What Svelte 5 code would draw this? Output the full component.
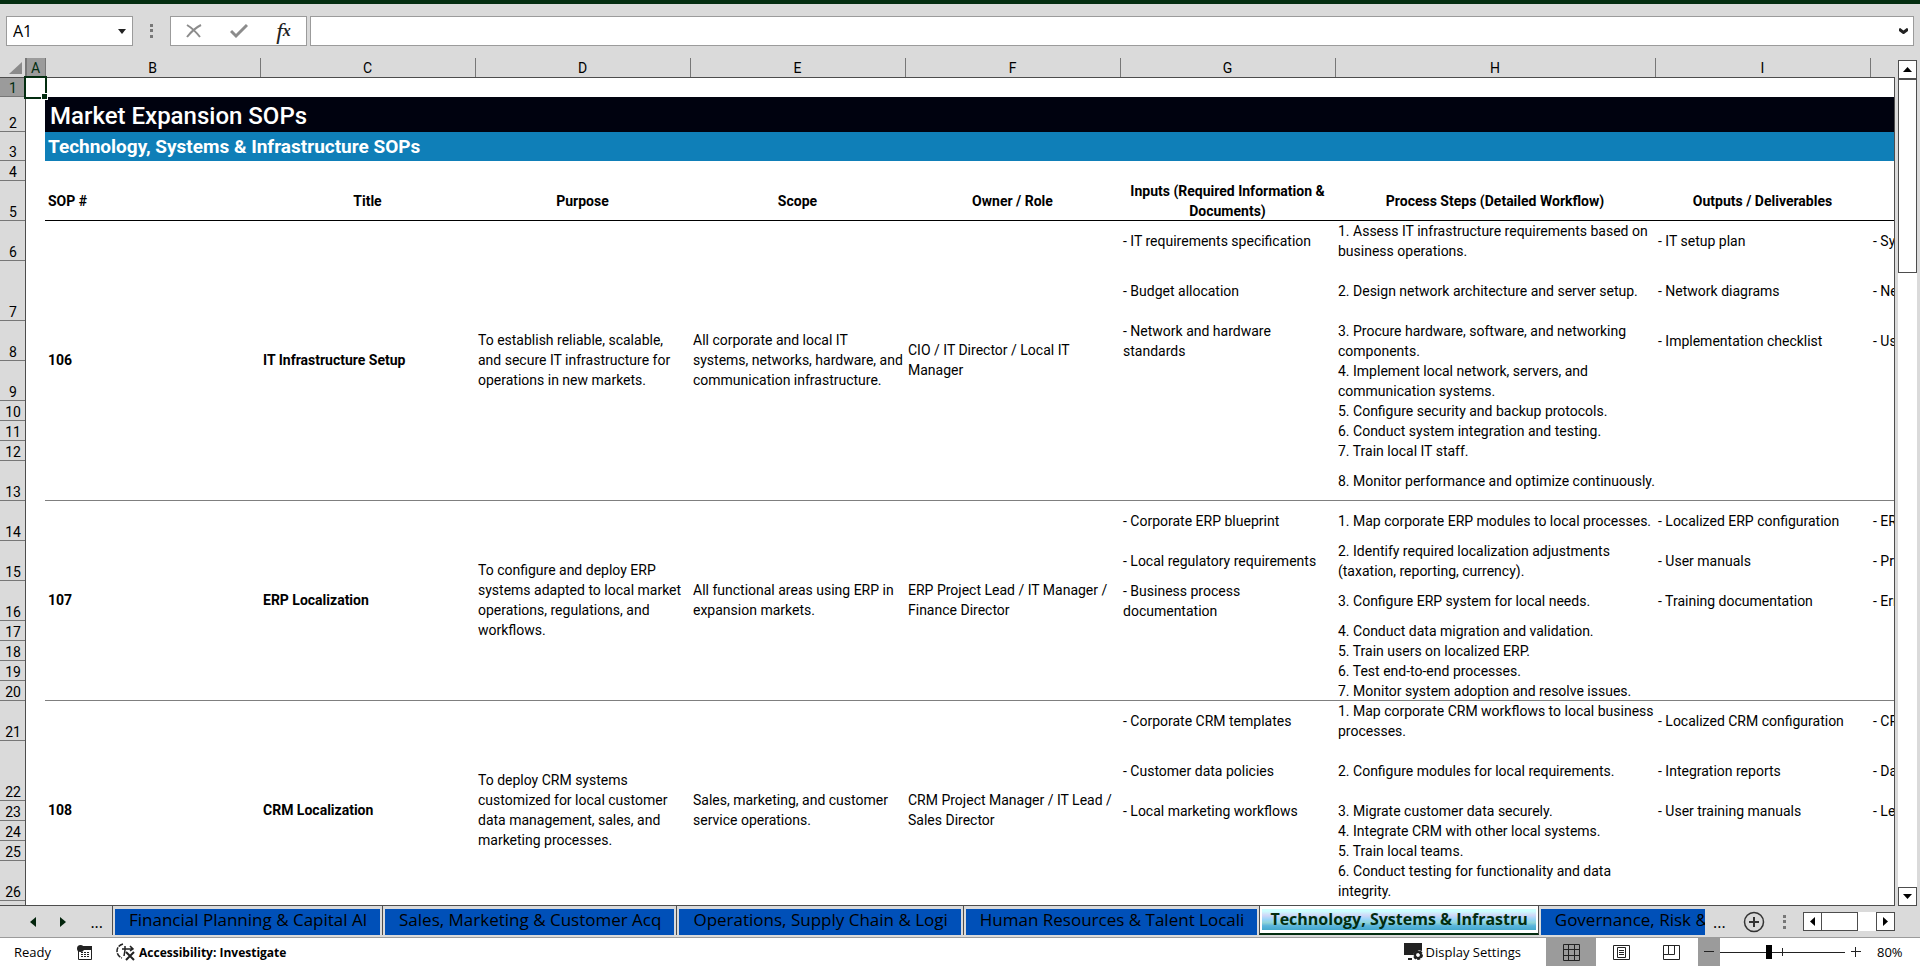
<script lang="ts">
  /**
   * Workbook
   *
   * Spreadsheet window: formula bar, sheet grid, sheet tabs and status bar.
   */
  interface Row {
    height: number;
    input?: string;
    step?: string;
    output?: string;
    tool?: string;
  }

  interface Sop {
    id: number;
    title: string;
    purpose: string;
    scope: string;
    owner: string;
    firstRow: number;
    rows: Row[];
  }

  const columns = [
    { name: "A", width: 19 },
    { name: "B", width: 215 },
    { name: "C", width: 215 },
    { name: "D", width: 215 },
    { name: "E", width: 215 },
    { name: "F", width: 215 },
    { name: "G", width: 215 },
    { name: "H", width: 320 },
    { name: "I", width: 215 },
    { name: "", width: 215 },
  ];

  const headings = [
    "SOP #",
    "Title",
    "Purpose",
    "Scope",
    "Owner / Role",
    "Inputs (Required Information & Documents)",
    "Process Steps (Detailed Workflow)",
    "Outputs / Deliverables",
    "",
  ];

  const sops: Sop[] = [
    {
      id: 106,
      title: "IT Infrastructure Setup",
      purpose: "To establish reliable, scalable, and secure IT infrastructure for operations in new markets.",
      scope: "All corporate and local IT systems, networks, hardware, and communication infrastructure.",
      owner: "CIO / IT Director / Local IT Manager",
      firstRow: 6,
      rows: [
        { height: 40, input: "- IT requirements specification", step: "1. Assess IT infrastructure requirements based on business operations.", output: "- IT setup plan", tool: "- System" },
        { height: 60, input: "- Budget allocation", step: "2. Design network architecture and server setup.", output: "- Network diagrams", tool: "- Network" },
        { height: 40, input: "- Network and hardware standards", step: "3. Procure hardware, software, and networking components.", output: "- Implementation checklist", tool: "- User" },
        { height: 40, step: "4. Implement local network, servers, and communication systems." },
        { height: 20, step: "5. Configure security and backup protocols." },
        { height: 20, step: "6. Conduct system integration and testing." },
        { height: 20, step: "7. Train local IT staff." },
        { height: 40, step: "8. Monitor performance and optimize continuously." },
      ],
    },
    {
      id: 107,
      title: "ERP Localization",
      purpose: "To configure and deploy ERP systems adapted to local market operations, regulations, and workflows.",
      scope: "All functional areas using ERP in expansion markets.",
      owner: "ERP Project Lead / IT Manager / Finance Director",
      firstRow: 14,
      rows: [
        { height: 40, input: "- Corporate ERP blueprint", step: "1. Map corporate ERP modules to local processes.", output: "- Localized ERP configuration", tool: "- ERP" },
        { height: 40, input: "- Local regulatory requirements", step: "2. Identify required localization adjustments (taxation, reporting, currency).", output: "- User manuals", tool: "- Process" },
        { height: 40, input: "- Business process documentation", step: "3. Configure ERP system for local needs.", output: "- Training documentation", tool: "- Error" },
        { height: 20, step: "4. Conduct data migration and validation." },
        { height: 20, step: "5. Train users on localized ERP." },
        { height: 20, step: "6. Test end-to-end processes." },
        { height: 20, step: "7. Monitor system adoption and resolve issues." },
      ],
    },
    {
      id: 108,
      title: "CRM Localization",
      purpose: "To deploy CRM systems customized for local customer data management, sales, and marketing processes.",
      scope: "Sales, marketing, and customer service operations.",
      owner: "CRM Project Manager / IT Lead / Sales Director",
      firstRow: 21,
      rows: [
        { height: 40, input: "- Corporate CRM templates", step: "1. Map corporate CRM workflows to local business processes.", output: "- Localized CRM configuration", tool: "- CRM" },
        { height: 60, input: "- Customer data policies", step: "2. Configure modules for local requirements.", output: "- Integration reports", tool: "- Data" },
        { height: 20, input: "- Local marketing workflows", step: "3. Migrate customer data securely.", output: "- User training manuals", tool: "- Lead" },
        { height: 20, step: "4. Integrate CRM with other local systems." },
        { height: 20, step: "5. Train local teams." },
        { height: 40, step: "6. Conduct testing for functionality and data integrity." },
        { height: 20 },
      ],
    },
  ];

  const tabs = [
    "Financial Planning & Capital Al",
    "Sales, Marketing & Customer Acq",
    "Operations, Supply Chain & Logi",
    "Human Resources & Talent Locali",
    "Technology, Systems & Infrastru",
    "Governance, Risk &",
  ];

  let activeTab = $state(4);
  let cellName = $state("A1");
  let formula = $state("");
  let zoom = $state(80);

  const tableWidth = 26 + columns.reduce((sum, column) => sum + column.width, 0);
</script>

<div class="workbook">
  <div class="title-edge"></div>

  <header class="formula-bar">
    <div class="name-box">
      <input type="text" aria-label="Name box" bind:value={cellName} />
      <button type="button" aria-label="Named ranges">
        <svg width="8" height="5" viewBox="0 0 8 5"><path d="M0 0h8L4 5z" fill="#222" /></svg>
      </button>
    </div>
    <svg class="grip" width="3" height="14" viewBox="0 0 3 14" fill="#777">
      <path d="M0 0h3v3H0zM0 5h3v3H0zM0 11h3v3H0z" />
    </svg>
    <div class="formula-actions">
      <button type="button" aria-label="Cancel">
        <svg width="16" height="16" viewBox="0 0 16 16" fill="none" stroke="#8c8c8c" stroke-width="2">
          <path d="M1 2c5 3 9 7 13 12M15 2C9 5 5 9 1 14" />
        </svg>
      </button>
      <button type="button" aria-label="Enter">
        <svg width="18" height="16" viewBox="0 0 18 16" fill="none" stroke="#8c8c8c" stroke-width="3">
          <path d="M1 8l5 5L17 2" />
        </svg>
      </button>
      <button type="button" aria-label="Insert function" class="fx">f<sub>x</sub></button>
    </div>
    <div class="formula-input">
      <input type="text" aria-label="Formula" bind:value={formula} />
      <button type="button" aria-label="Expand formula bar">
        <svg width="9" height="6" viewBox="0 0 9 6" fill="none" stroke="#222" stroke-width="3">
          <path d="M0 1l4.500 3.500L9 1" />
        </svg>
      </button>
    </div>
  </header>

  <main class="sheet-area">
    <div class="sheet">
      <table style="width: {tableWidth}px">
        <colgroup>
          <col class="gutter" />
          {#each columns as column}
            <col style="width: {column.width}px" />
          {/each}
        </colgroup>
        <thead>
          <tr>
            <th class="corner" aria-label="Select all">
              <svg width="13" height="12" viewBox="0 0 13 12"><path d="M13 0v12H0z" fill="#8a8a8a" /></svg>
            </th>
            {#each columns as column}
              <th class="col-head" class:selected={column.name === "A"} scope="col">{column.name}</th>
            {/each}
          </tr>
        </thead>
        <tbody>
          <tr style="height: 19px">
            <th class="row-head selected" scope="row">1</th>
            <td class="active-cell"><span class="cursor"></span></td>
            <td colspan="9"></td>
          </tr>
          <tr style="height: 35px">
            <th class="row-head" scope="row">2</th>
            <td></td>
            <td class="sheet-title" colspan="9">Market Expansion SOPs</td>
          </tr>
          <tr style="height: 29px">
            <th class="row-head" scope="row">3</th>
            <td></td>
            <td class="sheet-subtitle" colspan="9">Technology, Systems &amp; Infrastructure SOPs</td>
          </tr>
          <tr style="height: 20px">
            <th class="row-head" scope="row">4</th>
            <td colspan="10"></td>
          </tr>
          <tr style="height: 40px">
            <th class="row-head" scope="row">5</th>
            <td></td>
            {#each headings as heading}
              <th class="heading" scope="col">{heading}</th>
            {/each}
          </tr>
          {#each sops as sop}
            {#each sop.rows as row, i}
              <tr style="height: {row.height}px" class:last={i === sop.rows.length - 1}>
                <th class="row-head" scope="row">{sop.firstRow + i}</th>
                <td></td>
                {#if i === 0}
                  <td class="merged strong" rowspan={sop.rows.length}>{sop.id}</td>
                  <td class="merged strong" rowspan={sop.rows.length}>{sop.title}</td>
                  <td class="merged" rowspan={sop.rows.length}>{sop.purpose}</td>
                  <td class="merged" rowspan={sop.rows.length}>{sop.scope}</td>
                  <td class="merged" rowspan={sop.rows.length}>{sop.owner}</td>
                {/if}
                <td class="item">{row.input ?? ""}</td>
                <td class="item">{row.step ?? ""}</td>
                <td class="item">{row.output ?? ""}</td>
                <td class="item">{row.tool ?? ""}</td>
              </tr>
            {/each}
          {/each}
        </tbody>
      </table>
    </div>

    <div class="v-scroll">
      <button type="button" aria-label="Scroll up">
        <svg width="9" height="5" viewBox="0 0 9 5"><path d="M0 5h9L4.500 0z" /></svg>
      </button>
      <div class="v-track"><div class="v-thumb"></div></div>
      <button type="button" aria-label="Scroll down">
        <svg width="9" height="5" viewBox="0 0 9 5"><path d="M0 0h9L4.500 5z" /></svg>
      </button>
    </div>
  </main>

  <nav class="tab-bar" aria-label="Sheets">
    <div class="tab-nav">
      <button type="button" aria-label="Previous sheet">
        <svg width="6" height="10" viewBox="0 0 6 10"><path d="M6 0v10L0 5z" fill="#03240c" /></svg>
      </button>
      <button type="button" aria-label="Next sheet">
        <svg width="6" height="10" viewBox="0 0 6 10"><path d="M0 0v10l6-5z" fill="#03240c" /></svg>
      </button>
      <button type="button" aria-label="More sheets" class="more">...</button>
    </div>
    <div class="tabs">
      {#each tabs as tab, i}
        <button type="button" class="tab" class:active={i === activeTab} onclick={() => (activeTab = i)}>
          <span>{tab}</span>
        </button>
      {/each}
    </div>
    <div class="tab-tools">
      <button type="button" aria-label="More sheets" class="more">...</button>
      <button type="button" aria-label="New sheet" class="add">
        <svg width="22" height="22" viewBox="0 0 22 22" fill="none" stroke="#333">
          <circle cx="11" cy="11" r="9.500" stroke-width="1.500" />
          <path d="M11 6v10M6 11h10" stroke-width="2" />
        </svg>
      </button>
      <svg width="3" height="14" viewBox="0 0 3 14" fill="#777">
        <path d="M0 0h3v3H0zM0 5h3v3H0zM0 11h3v3H0z" />
      </svg>
      <div class="h-scroll">
        <button type="button" aria-label="Scroll left">
          <svg width="5" height="9" viewBox="0 0 5 9"><path d="M5 0v9L0 4.500z" /></svg>
        </button>
        <div class="h-track"><div class="h-thumb"></div></div>
        <button type="button" aria-label="Scroll right">
          <svg width="5" height="9" viewBox="0 0 5 9"><path d="M0 0v9l5-4.500z" /></svg>
        </button>
      </div>
    </div>
  </nav>

  <footer class="status-bar">
    <span>Ready</span>
    <button type="button" aria-label="Record macro" class="macro">
      <svg width="15" height="15" viewBox="0 0 15 15">
        <path d="M1.500 5v9.500h13V1.500H6" fill="none" stroke="#222" />
        <path d="M6 1h9v4H5z" fill="#222" />
        <circle cx="3.500" cy="3.500" r="3.500" fill="#222" />
        <path d="M4 7.500h9M4 9.500h9M4 11.500h9" stroke="#222" stroke-dasharray="2 1" />
      </svg>
    </button>
    <button type="button" class="accessibility">
      <svg width="20" height="18" viewBox="0 0 20 18" fill="none" stroke="#222" stroke-width="1.500">
        <path d="M7 1C3 2 1 5 1 8s2 6 5 7" stroke-dasharray="5 1" />
        <path d="M6 6h10M14 3l3 3-3 2M9 3v4l-1 6" />
        <path d="M10 9l8 8M18 9l-8 8" stroke-width="2" />
      </svg>
      <span>Accessibility: Investigate</span>
    </button>
    <div class="spacer"></div>
    <button type="button" class="display-settings">
      <svg width="20" height="18" viewBox="0 0 20 18">
        <path d="M0 0h18v8l-4-1-5 4v1H0z" fill="#222" />
        <path d="M4 15h4v2H4z" fill="#222" />
        <circle cx="14" cy="12" r="3.500" fill="#fff" stroke="#222" stroke-width="3" stroke-dasharray="2.500 1" />
        <circle cx="14" cy="12" r="3" fill="none" stroke="#222" stroke-width="2" />
      </svg>
      <span>Display Settings</span>
    </button>
    <div class="views">
      <button type="button" aria-label="Normal view" class="current">
        <svg width="17" height="17" viewBox="0 0 17 17" fill="none" stroke="#222">
          <path d="M.5.5h16v16H.5zM.5 5.500h16M.5 11.500h16M5.500.5v16M11.500.5v16" />
        </svg>
      </button>
      <button type="button" aria-label="Page layout">
        <svg width="17" height="15" viewBox="0 0 17 15" fill="none" stroke="#222">
          <path d="M.5.5h16v14H.5zM4.500 2.500h8v10h-8zM6 5.500h5M6 7.500h5M6 9.500h5" />
        </svg>
      </button>
      <button type="button" aria-label="Page break preview">
        <svg width="17" height="15" viewBox="0 0 17 15" fill="none" stroke="#222">
          <path d="M.5.5h16v14H.5zM5.500.5v9M5.500 9.500h6v-9M.5 9.500h5" />
        </svg>
      </button>
    </div>
    <button type="button" aria-label="Zoom out" class="zoom-out">
      <svg width="10" height="10" viewBox="0 0 10 10" stroke="#222"><path d="M0 4.500h10" /></svg>
    </button>
    <input type="range" aria-label="Zoom" min="10" max="190" bind:value={zoom} />
    <button type="button" aria-label="Zoom in" class="zoom-in">
      <svg width="10" height="10" viewBox="0 0 10 10" stroke="#222"><path d="M0 4.500h10M4.500 0v10" /></svg>
    </button>
    <span class="zoom-value">{zoom}%</span>
  </footer>
</div>

<style>
  :global(body) {
    margin: 0;
    background: #fff;
  }

  .workbook {
    --chrome: #dadada;
    --chrome-dark: #9b9b9b;
    --line: #4d4d4d;
    --green: #032d10;
    --ui: "Open Sans", "Noto Sans", sans-serif;
    display: flex;
    flex-direction: column;
    height: 100vh;
    overflow: hidden;
    background: var(--chrome);
    font-family: Roboto, sans-serif;
    font-size: 14px;
    color: #000;
  }

  button {
    display: flex;
    align-items: center;
    justify-content: center;
    margin: 0;
    padding: 0;
    border: none;
    background: none;
    font: inherit;
    color: inherit;
  }

  input {
    box-sizing: border-box;
    min-width: 0;
    margin: 0;
    border: none;
    outline: none;
    font: inherit;
  }

  svg {
    flex: none;
  }

  .title-edge {
    flex: none;
    height: 4px;
    background: var(--green);
  }

  /* Formula bar */
  .formula-bar {
    display: flex;
    align-items: center;
    flex: none;
    height: 30px;
    padding: 12px 6px;
  }

  .name-box,
  .formula-actions,
  .formula-input {
    display: flex;
    box-sizing: border-box;
    height: 30px;
    border: 1px solid var(--chrome-dark);
    background: #fff;
  }

  .name-box {
    width: 127px;
    font-family: var(--ui);
    font-size: 16px;
  }

  .name-box input {
    flex: 1;
    padding: 0 6px;
  }

  .name-box button {
    width: 20px;
  }

  .grip {
    margin: 0 17px;
  }

  .formula-actions {
    width: 137px;
    margin-right: 3px;
  }

  .formula-actions button {
    flex: 1;
  }

  .fx {
    font: italic 24px "Liberation Serif", serif;
    color: #222;
  }

  .fx sub {
    font-size: 16px;
    font-weight: 700;
  }

  .formula-input {
    flex: 1;
  }

  .formula-input input {
    flex: 1;
    padding: 0 6px;
  }

  .formula-input button {
    width: 20px;
  }

  /* Sheet grid */
  .sheet-area {
    display: flex;
    flex: 1;
    min-height: 0;
  }

  .sheet {
    flex: 1;
    min-width: 0;
    overflow: hidden;
    border-bottom: 1px solid var(--line);
    background: #fff;
  }

  table {
    table-layout: fixed;
    border-collapse: separate;
    border-spacing: 0;
    line-height: 20px;
  }

  .gutter {
    width: 26px;
  }

  th,
  td {
    box-sizing: border-box;
    padding: 0;
    text-align: left;
    vertical-align: middle;
  }

  .corner,
  .col-head {
    height: 20px;
    background: var(--chrome);
    box-shadow: inset 0 -1px var(--line), inset 1px 0 #777;
    font-size: 14px;
    font-weight: 400;
    text-align: center;
  }

  .corner {
    box-shadow: inset 0 -1px var(--line), inset -1px 0 #777;
  }

  .corner svg {
    display: block;
    margin-left: 9px;
  }

  .row-head {
    background: var(--chrome);
    box-shadow: inset -1px 0 var(--line), inset 0 -1px #777;
    font-size: 14px;
    font-weight: 400;
    text-align: center;
    vertical-align: bottom;
    line-height: 18px;
  }

  .selected {
    background: var(--chrome-dark);
    color: var(--green);
  }

  .active-cell {
    position: relative;
  }

  .cursor {
    position: absolute;
    inset: -2px;
    border: 2px solid var(--green);
  }

  .cursor::after {
    content: "";
    position: absolute;
    right: -3px;
    bottom: -3px;
    width: 5px;
    height: 5px;
    border: 1px solid #fff;
    background: var(--green);
  }

  .sheet-title {
    padding: 2px 0 0 5px;
    background: #00020f;
    color: #fff;
    font-size: 24px;
    font-weight: 500;
  }

  .sheet-subtitle {
    padding-left: 3px;
    background: #0f7fb8;
    color: #fff;
    font-size: 19px;
    font-weight: 700;
  }

  .heading {
    padding: 0 3px;
    box-shadow: inset 0 -1px #000;
    font-weight: 700;
    text-align: center;
  }

  .heading:nth-child(3) {
    text-align: left;
  }

  .merged {
    padding: 0 1px 2px 3px;
  }

  .item {
    padding-left: 3px;
  }

  .merged,
  .last .item {
    box-shadow: inset 0 -1px #7f7f7f;
  }

  .strong {
    font-weight: 700;
  }

  /* Scroll bars */
  .v-scroll {
    display: flex;
    flex-direction: column;
    flex: none;
    width: 19px;
    padding: 2px 3px 0 4px;
    background: linear-gradient(var(--line), var(--line)) 0 19px / 1px 100% no-repeat;
  }

  .v-scroll button {
    box-sizing: border-box;
    height: 19px;
    border: 1px solid var(--line);
    background: #fff;
  }

  .v-track {
    flex: 1;
    background: #fff;
  }

  .v-thumb {
    box-sizing: border-box;
    height: 24%;
    border: 1px solid var(--line);
    background: #fff;
  }

  /* Sheet tabs */
  .tab-bar {
    display: flex;
    flex: none;
    height: 31px;
    border-bottom: 1px solid var(--chrome-dark);
    font-family: var(--ui);
  }

  .tab-nav {
    display: flex;
    align-items: center;
    justify-content: space-between;
    flex: none;
    width: 73px;
    padding: 0 9px 0 30px;
  }

  .more {
    font-size: 16px;
    line-height: 20px;
  }

  .tabs {
    display: flex;
    flex: 1;
    min-width: 0;
    overflow: hidden;
  }

  .tab {
    box-sizing: border-box;
    flex: none;
    height: 29px;
    padding: 3px 2px 0;
    border-left: 1px solid var(--line);
    font-size: 17px;
    white-space: nowrap;
  }

  .tab span {
    padding: 0 13px 4px 14px;
    background: #0050b8;
    line-height: 22px;
  }

  .tab.active {
    padding-top: 0;
    border-right: 1px solid var(--line);
    border-bottom: 2px solid var(--green);
    background: #fff;
    color: var(--green);
    font-size: 16px;
    font-weight: 700;
  }

  .tab.active + .tab {
    border-left: none;
  }

  .tab.active span {
    padding: 0 8px;
    background: linear-gradient(#ccffff 10%, #d0d8f8 30%, #99d6f8 50%, #8fd4d8 65%, #5ab4dc 80%, #44aacc);
    line-height: 21px;
  }

  .tab-tools {
    display: flex;
    align-items: center;
    justify-content: space-between;
    flex: none;
    width: 182px;
    padding: 0 25px 0 8px;
  }

  .h-scroll {
    display: flex;
    width: 92px;
    height: 19px;
  }

  .h-scroll button {
    box-sizing: border-box;
    width: 19px;
    border: 1px solid var(--line);
    background: #fff;
  }

  .h-track {
    flex: 1;
    background: #fff;
  }

  .h-thumb {
    box-sizing: border-box;
    width: 66%;
    height: 100%;
    border: 1px solid var(--line);
    border-left: none;
  }

  /* Status bar */
  .status-bar {
    display: flex;
    align-items: center;
    flex: none;
    height: 28px;
    padding-left: 14px;
    background: #fff;
    font-family: var(--ui);
    font-size: 13px;
  }

  .macro {
    margin: 0 24px 0 26px;
  }

  .accessibility {
    gap: 3px;
    font-size: 12px;
    font-weight: 700;
  }

  .spacer {
    flex: 1;
  }

  .display-settings {
    gap: 2px;
    margin-right: 25px;
  }

  .views {
    display: flex;
    align-self: stretch;
    margin-right: 2px;
  }

  .views button {
    width: 50px;
  }

  .current,
  .zoom-out {
    background: var(--chrome-dark);
  }

  .zoom-out {
    align-self: stretch;
    width: 22px;
  }

  input[type="range"] {
    width: 125px;
    height: 18px;
    appearance: none;
    background: linear-gradient(#222, #222) center / 1px 8px no-repeat,
      linear-gradient(#222, #222) center / 100% 1px no-repeat;
  }

  input[type="range"]::-webkit-slider-thumb {
    width: 6px;
    height: 14px;
    appearance: none;
    background: #000;
  }

  .zoom-in {
    margin: 0 16px 0 6px;
  }

  .zoom-value {
    width: 43px;
  }
</style>
